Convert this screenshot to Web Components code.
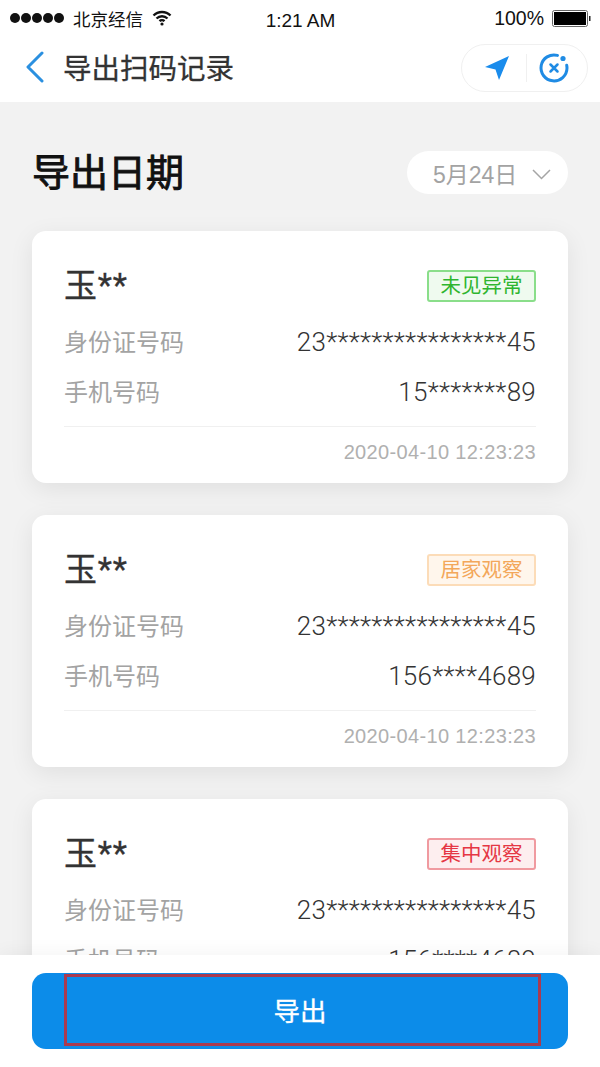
<!DOCTYPE html>
<html lang="zh">
<head>
<meta charset="utf-8">
<title>导出扫码记录</title>
<style>
  html, body { margin: 0; padding: 0; }
  body { font-family: "Liberation Sans", "Noto Sans CJK SC", sans-serif; }
</style>
</head>
<body>
<scan-page>
  <status-bar slot="top"></status-bar>
  <nav-bar slot="top" title="导出扫码记录"></nav-bar>
  <date-heading date="5月24日"></date-heading>
  <record-card name="玉**" status="ok" label="未见异常" phone="15*******89"></record-card>
  <record-card name="玉**" status="home" label="居家观察" phone="156****4689"></record-card>
  <record-card name="玉**" status="central" label="集中观察" phone="156****4689"></record-card>
  <export-bar slot="bottom" label="导出"></export-bar>
</scan-page>

<script>
  class ScanPage extends HTMLElement {
    constructor() {
      super();
      this.attachShadow({ mode: 'open' });
      this.shadowRoot.innerHTML = `
        <style>
          :host {
            display: flex;
            flex-direction: column;
            width: 600px;
            height: 1067px;
            overflow: hidden;
            background: #f2f2f2;
          }
          main {
            flex: 1;
            min-height: 0;
            overflow: hidden;
            display: flex;
            flex-direction: column;
            gap: 32px;
            padding: 0 32px;
            margin: 0;
          }
        </style>
        <slot name="top"></slot>
        <main><slot></slot></main>
        <slot name="bottom"></slot>
      `;
    }
  }

  class StatusBar extends HTMLElement {
    constructor() {
      super();
      this.attachShadow({ mode: 'open' });
      this.shadowRoot.innerHTML = `
        <style>
          :host {
            display: grid;
            grid-template-columns: 1fr auto 1fr;
            align-items: center;
            height: 36px;
            padding: 0 9px 0 10px;
            box-sizing: border-box;
            background: #fff;
            color: #111;
            font-size: 19px;
          }
          .left, .right { display: flex; align-items: center; }
          .left { gap: 9px; }
          .right { justify-content: flex-end; gap: 8px; }
          .dots { display: flex; gap: 1px; }
          .dots i { width: 10px; height: 10px; border-radius: 50%; background: #111; }
          .carrier { font-size: 17.5px; }
          .time { position: relative; top: 3px; }
          .pct { font-size: 19.500px; }
          svg { display: block; }
        </style>
        <div class="left">
          <span class="dots"><i></i><i></i><i></i><i></i><i></i></span>
          <span class="carrier">北京经信</span>
          <svg width="20" height="16" viewBox="0 0 20 16" fill="none" stroke="#111" stroke-width="2.400">
            <path d="M1.5 5.5a12 12 0 0 1 17 0"/>
            <path d="M4.5 8.5a8 8 0 0 1 11 0"/>
            <path d="M7.5 11.2a3.6 3.6 0 0 1 5 0"/>
            <circle cx="10" cy="14" r="1.6" fill="#111" stroke="none"/>
          </svg>
        </div>
        <span class="time">1:21 AM</span>
        <div class="right">
          <span class="pct">100%</span>
          <svg width="39" height="17" viewBox="0 0 39 17">
            <rect x="0.5" y="0.5" width="35" height="16" rx="2" fill="none" stroke="#666"/>
            <rect x="2" y="2" width="32" height="13" fill="#000"/>
            <path d="M37 6h1.500v5H37z" fill="#222"/>
          </svg>
        </div>
      `;
    }
  }

  class NavBar extends HTMLElement {
    constructor() {
      super();
      this.attachShadow({ mode: 'open' });
    }

    connectedCallback() {
      this.shadowRoot.innerHTML = `
        <style>
          :host {
            display: flex;
            align-items: center;
            height: 66px;
            padding: 0 12px 0 25px;
            box-sizing: border-box;
            background: #fff;
          }
          h1 {
            margin: 0 0 5px 18px;
            font-size: 28.500px;
            font-weight: 400;
            color: #333;
            flex: 1;
            -webkit-text-stroke: 0.3px #333;
          }
          .capsule {
            display: flex;
            align-items: center;
            width: 127px;
            height: 48px;
            box-sizing: border-box;
            border: 1px solid #f0f0f0;
            border-radius: 24px;
            background: #fff;
            padding-left: 22px;
            margin-bottom: 2px;
          }
          .sep { width: 1px; height: 28px; background: #f0f0f0; margin: 0 11px 0 16px; }
          svg { display: block; flex: none; }
        </style>
        <svg width="20" height="32" viewBox="0 0 20 32" fill="none" stroke="#2b90e0" stroke-width="3" stroke-linecap="round" stroke-linejoin="round" style="margin-bottom:4px">
          <path d="M17 2 3 16l14 14"/>
        </svg>
        <h1>${this.getAttribute('title')}</h1>
        <div class="capsule">
          <svg width="26" height="26" viewBox="0 0 26 26">
            <path d="M25 1 15 25l-3.500-10.500L1 12z" fill="#1a8cec"/>
          </svg>
          <span class="sep"></span>
          <svg width="32" height="32" viewBox="0 0 32 32" fill="none" stroke="#1f8be4" stroke-width="3" stroke-linecap="round">
            <path d="M19.500 3.400A13 13 0 1 0 29 16c0-1-.1-1.800-.3-2.700"/>
            <path d="M12.500 12.500l7 7M19.500 12.500l-7 7" stroke-width="2.500"/>
            <circle cx="25" cy="6.500" r="2.600" fill="#1f8be4" stroke="none"/>
          </svg>
        </div>
      `;
    }
  }

  class DateHeading extends HTMLElement {
    constructor() {
      super();
      this.attachShadow({ mode: 'open' });
    }

    connectedCallback() {
      this.shadowRoot.innerHTML = `
        <style>
          :host {
            display: flex;
            align-items: center;
            justify-content: space-between;
            flex: none;
            padding-top: 49px;
            margin-bottom: 5px;
          }
          h2 { margin: 0; font-size: 38px; line-height: 42px; font-weight: 400; color: #111; -webkit-text-stroke: 0.9px #111; }
          .picker {
            display: flex;
            align-items: center;
            gap: 15px;
            width: 161px;
            height: 43px;
            box-sizing: border-box;
            padding-left: 26px;
            border-radius: 22px;
            background: #fff;
            color: #a3a3a3;
            font-size: 23px;
          }
          svg { display: block; margin-top: 3px; }
        </style>
        <h2>导出日期</h2>
        <div class="picker">
          <span>${this.getAttribute('date')}</span>
          <svg width="19" height="11" viewBox="0 0 19 11" fill="none" stroke="#a5a5a5" stroke-width="1.500">
            <path d="M1 1l8.500 8.500L18 1"/>
          </svg>
        </div>
      `;
    }
  }

  class RecordCard extends HTMLElement {
    constructor() {
      super();
      this.attachShadow({ mode: 'open' });
    }

    connectedCallback() {
      this.shadowRoot.innerHTML = `
        <style>
          :host {
            display: block;
            flex: none;
            height: 252px;
            box-sizing: border-box;
            padding: 36px 32px 0 32px;
            background: #fff;
            border-radius: 14px;
            box-shadow: 0 6px 24px rgba(0, 0, 0, 0.08);
          }
          .head, .row, .time { display: flex; align-items: center; justify-content: space-between; }
          .head { height: 38px; }
          .name {
            font-family: Roboto, "Noto Sans CJK SC", sans-serif;
            font-size: 33px;
            letter-spacing: 0.8px;
            color: #333;
            margin-bottom: 6px;
            -webkit-text-stroke: 0.3px #333;
          }
          .tag {
            box-sizing: border-box;
            width: 109px;
            height: 32px;
            line-height: 28px;
            text-align: center;
            font-size: 20.500px;
            border: 2px solid;
            border-radius: 3px;
          }
          :host([status="ok"]) .tag { color: #2fb52f; border-color: #8ade8a; background: #effaef; }
          :host([status="home"]) .tag { color: #f3a75a; border-color: #fcdcb8; background: #fff6ec; }
          :host([status="central"]) .tag { color: #e53744; border-color: #f09aa0; background: #fdeeef; }
          .row { height: 50px; font-size: 24px; color: #a3a3a3; }
          .rows { margin-top: 10px; }
          .value {
            font-family: Roboto, sans-serif;
            font-weight: 300;
            color: #333;
            font-size: 26px;
            letter-spacing: 0.25px;
            margin-top: 4px;
          }
          .time {
            justify-content: flex-end;
            margin-top: 11px;
            border-top: 1px solid #f0f0f0;
            padding-top: 14px;
            font-size: 20px;
            letter-spacing: 0.35px;
            color: #b0b0b0;
          }
        </style>
        <div class="head">
          <span class="name">${this.getAttribute('name')}</span>
          <span class="tag">${this.getAttribute('label')}</span>
        </div>
        <div class="rows">
          <div class="row"><span>身份证号码</span><span class="value">23****************45</span></div>
          <div class="row"><span>手机号码</span><span class="value">${this.getAttribute('phone')}</span></div>
        </div>
        <div class="time">2020-04-10 12:23:23</div>
      `;
    }
  }

  class ExportBar extends HTMLElement {
    constructor() {
      super();
      this.attachShadow({ mode: 'open' });
    }

    connectedCallback() {
      this.shadowRoot.innerHTML = `
        <style>
          :host {
            display: block;
            flex: none;
            position: relative;
            height: 112px;
            box-sizing: border-box;
            padding: 18px 32px 0;
            background: #fff;
            box-shadow: 0 -4px 16px rgba(0, 0, 0, 0.04);
          }
          button {
            display: block;
            width: 100%;
            height: 76px;
            padding: 0 0 4px;
            border: 0;
            border-radius: 14px;
            background: #0c8ce9;
            color: #fff;
            font: inherit;
            font-size: 26.500px;
            -webkit-text-stroke: 0.3px #fff;
          }
          /* red highlight drawn over the button */
          .mark {
            position: absolute;
            left: 64px;
            top: 19px;
            width: 477px;
            height: 72px;
            box-sizing: border-box;
            border: 3px solid #aa3a50;
            pointer-events: none;
          }
        </style>
        <button>${this.getAttribute('label')}</button>
        <div class="mark"></div>
      `;
    }
  }

  customElements.define('scan-page', ScanPage);
  customElements.define('status-bar', StatusBar);
  customElements.define('nav-bar', NavBar);
  customElements.define('date-heading', DateHeading);
  customElements.define('record-card', RecordCard);
  customElements.define('export-bar', ExportBar);
</script>
</body>
</html>
